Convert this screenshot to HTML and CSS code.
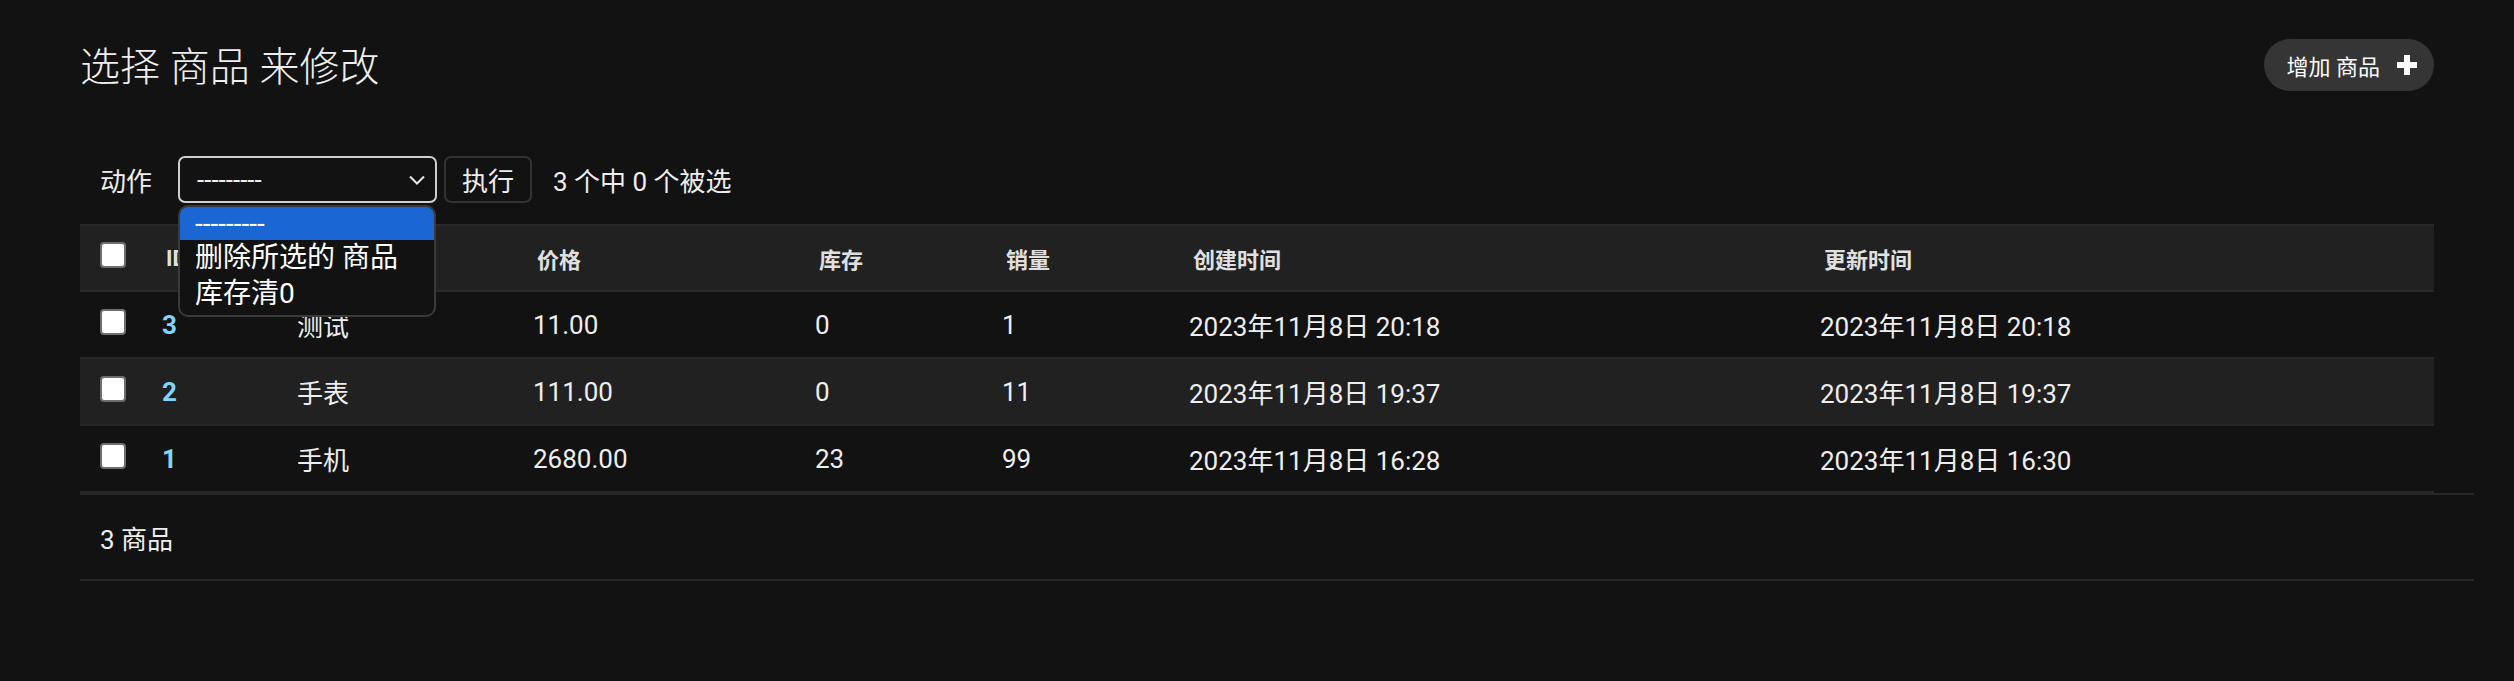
FILE: index.html
```html
<!DOCTYPE html>
<html lang="zh-CN">
<head>
<meta charset="utf-8">
<title>选择 商品 来修改</title>
<link rel="stylesheet" href="styles.css">
</head>
<body>
<div class="page">
  <div class="page-head">
    <h1 class="title">选择 商品 来修改</h1>
    <a class="add-btn" href="#">增加 商品<svg class="plus" width="20" height="20" viewBox="0 0 20 20"><rect x="7" y="0" width="6" height="20" fill="#fff"/><rect x="0" y="7" width="20" height="6" fill="#fff"/></svg></a>
  </div>

  <div class="actions">
    <span class="label">动作</span>
    <div class="select">
      <span>---------</span>
      <svg class="chev" width="16" height="10" viewBox="0 0 16 10"><polyline points="1,1.5 8,8.5 15,1.5" fill="none" stroke="#e6e6e6" stroke-width="2"/></svg>
    </div>
    <button class="go">执行</button>
    <span class="counter">3 个中 0 个被选</span>
    <div class="dropdown">
      <div class="opt opt-sel">---------</div>
      <div class="opt">删除所选的 商品</div>
      <div class="opt">库存清0</div>
    </div>
  </div>

  <table class="results">
    <colgroup>
      <col class="c-chk"><col class="c-id"><col class="c-name"><col class="c-price"><col class="c-stock"><col class="c-sales"><col class="c-created"><col class="c-updated">
    </colgroup>
    <thead>
      <tr>
        <th class="chk-cell"><span class="cb"></span></th>
        <th>ID</th>
        <th class="hidden-head"></th>
        <th>价格</th>
        <th>库存</th>
        <th>销量</th>
        <th>创建时间</th>
        <th>更新时间</th>
      </tr>
    </thead>
    <tbody>
      <tr>
        <td class="chk-cell"><span class="cb"></span></td>
        <td><a class="idlink" href="#">3</a></td>
        <td>测试</td>
        <td>11.00</td>
        <td>0</td>
        <td>1</td>
        <td>2023年11月8日 20:18</td>
        <td>2023年11月8日 20:18</td>
      </tr>
      <tr class="even">
        <td class="chk-cell"><span class="cb"></span></td>
        <td><a class="idlink" href="#">2</a></td>
        <td>手表</td>
        <td>111.00</td>
        <td>0</td>
        <td>11</td>
        <td>2023年11月8日 19:37</td>
        <td>2023年11月8日 19:37</td>
      </tr>
      <tr>
        <td class="chk-cell"><span class="cb"></span></td>
        <td><a class="idlink" href="#">1</a></td>
        <td>手机</td>
        <td>2680.00</td>
        <td>23</td>
        <td>99</td>
        <td>2023年11月8日 16:28</td>
        <td>2023年11月8日 16:30</td>
      </tr>
    </tbody>
  </table>

  <div class="paginator">3 商品</div>
</div>
</body>
</html>
```

FILE: styles.css
```css
html, body {
  margin: 0;
  padding: 0;
  background: #121212;
}
body {
  font-family: Roboto, "Noto Sans CJK SC", sans-serif;
  color: #eeeeee;
  font-size: 26px;
}
.page {
  padding: 0 80px;
}
.page-head {
  display: flex;
  justify-content: space-between;
  align-items: flex-start;
  padding-top: 39px;
}
.title {
  margin: 0;
  font-size: 40px;
  font-weight: 300;
  line-height: 58px;
  color: #eeeeee;
}
.add-btn {
  display: flex;
  align-items: center;
  height: 52px;
  box-sizing: border-box;
  padding: 0 17px 0 23px;
  border-radius: 26px;
  background: #353535;
  color: #ffffff;
  text-decoration: none;
  font-size: 22px;
  gap: 17px;
}
.plus { display: block; }

.actions {
  position: relative;
  display: flex;
  align-items: center;
  margin-top: 59px;
  padding-left: 20px;
  height: 47px;
}
.label {
  margin-right: 26px;
}
.select {
  width: 259px;
  height: 47px;
  box-sizing: border-box;
  border: 2px solid #cfcfcf;
  border-radius: 7px;
  display: flex;
  align-items: center;
  justify-content: space-between;
  padding: 0 10px 0 17px;
  font-size: 26px;
}
.chev { display: block; }
.go {
  margin-left: 7px;
  height: 47px;
  width: 88px;
  box-sizing: border-box;
  border: 2px solid #333333;
  border-radius: 7px;
  background: #121212;
  color: #eeeeee;
  font-family: inherit;
  font-size: 26px;
  padding: 0;
}
.counter {
  margin-left: 21px;
}
.dropdown {
  position: absolute;
  left: 98px;
  top: 49px;
  width: 258px;
  height: 112px;
  box-sizing: border-box;
  border: 2px solid #3a3a3a;
  border-radius: 10px;
  background: #121212;
  overflow: hidden;
  z-index: 5;
  font-size: 28px;
}
.opt {
  height: 36px;
  line-height: 36px;
  padding-left: 15px;
  color: #ffffff;
  white-space: nowrap;
}
.opt-sel {
  background: #1a67d3;
  height: 33px;
  line-height: 33px;
}

.results {
  margin-top: 21px;
  width: 2354px;
  border-collapse: collapse;
  table-layout: fixed;
}
.c-chk { width: 66px; }
.c-id { width: 135px; }
.c-name { width: 236px; }
.c-price { width: 282px; }
.c-stock { width: 187px; }
.c-sales { width: 187px; }
.c-created { width: 631px; }
.c-updated { width: 630px; }

.results th {
  background: #212121;
  border-top: 2px solid #2a2a2a;
  border-bottom: 2px solid #2a2a2a;
  height: 64px;
  padding: 0 0 0 20px;
  text-align: left;
  font-size: 22px;
  font-weight: 700;
  color: #e0e0e0;
  vertical-align: middle;
}
.results td {
  height: 65px;
  padding: 0 0 0 16px;
  border-bottom: 2px solid #272727;
  vertical-align: middle;
  white-space: nowrap;
}
.results tr.even td {
  background: #212121;
}
.results .chk-cell {
  padding: 0 0 0 20px;
}
.cb {
  display: block;
  width: 26px;
  height: 26px;
  margin-top: -6px;
  box-sizing: border-box;
  background: #ffffff;
  border: 2px solid #6e6e6e;
  border-radius: 4px;
}
.idlink {
  color: #81d4fa;
  font-weight: 700;
  text-decoration: none;
}

.paginator {
  margin-right: -40px;
  height: 84px;
  border-top: 2px solid #272727;
  border-bottom: 2px solid #272727;
  display: flex;
  align-items: center;
  padding-left: 20px;
}
```
